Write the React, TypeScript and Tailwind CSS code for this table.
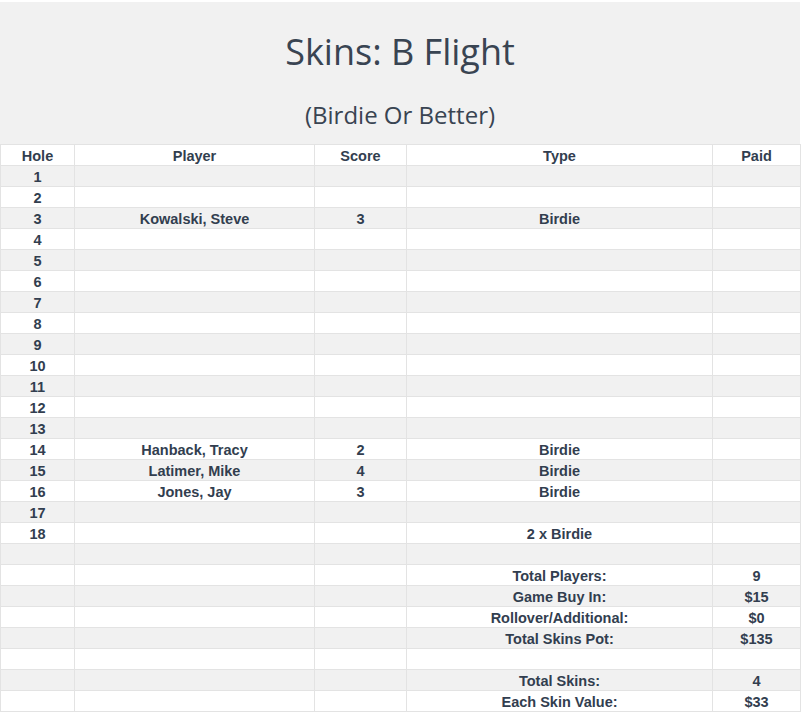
const rows: [string, string, string, string, string][] = [
  ["1", "", "", "", ""],
  ["2", "", "", "", ""],
  ["3", "Kowalski, Steve", "3", "Birdie", ""],
  ["4", "", "", "", ""],
  ["5", "", "", "", ""],
  ["6", "", "", "", ""],
  ["7", "", "", "", ""],
  ["8", "", "", "", ""],
  ["9", "", "", "", ""],
  ["10", "", "", "", ""],
  ["11", "", "", "", ""],
  ["12", "", "", "", ""],
  ["13", "", "", "", ""],
  ["14", "Hanback, Tracy", "2", "Birdie", ""],
  ["15", "Latimer, Mike", "4", "Birdie", ""],
  ["16", "Jones, Jay", "3", "Birdie", ""],
  ["17", "", "", "", ""],
  ["18", "", "", "2 x Birdie", ""],
  ["", "", "", "", ""],
  ["", "", "", "Total Players:", "9"],
  ["", "", "", "Game Buy In:", "$15"],
  ["", "", "", "Rollover/Additional:", "$0"],
  ["", "", "", "Total Skins Pot:", "$135"],
  ["", "", "", "", ""],
  ["", "", "", "Total Skins:", "4"],
  ["", "", "", "Each Skin Value:", "$33"],
];

const cell =
  "h-[21px] border-r border-b border-[#e3e3e3] p-0 pt-[2px] text-center align-middle leading-none";

export default function App() {
  return (
    <div className="min-h-screen bg-white font-['Liberation_Sans',Arial,sans-serif] text-[#323e4f]">
      <div className="w-[800px] pt-[2px]">
        {/* title block */}
        <div className="flex h-[142px] flex-col items-center bg-[#f1f1f1] font-['Open_Sans','Noto_Sans',sans-serif] text-[#394452]">
          <h1 className="mt-[28px] text-[36px] leading-[44px]">Skins: B Flight</h1>
          <p className="mt-[26px] text-[24px] leading-[30px]">(Birdie Or Better)</p>
        </div>

        <table className="w-[800px] table-fixed border-collapse border-l border-[#e3e3e3] text-[14.5px] font-bold">
          <colgroup>
            <col className="w-[74px]" />
            <col className="w-[240px]" />
            <col className="w-[92px]" />
            <col className="w-[306px]" />
            <col className="w-[88px]" />
          </colgroup>
          <thead>
            <tr className="bg-white">
              {["Hole", "Player", "Score", "Type", "Paid"].map((h) => (
                <th key={h} className={cell + " border-t"}>
                  {h}
                </th>
              ))}
            </tr>
          </thead>
          <tbody>
            {rows.map((r, i) => (
              <tr key={i} className={i % 2 === 0 ? "bg-[#f1f1f1]" : "bg-white"}>
                {r.map((v, j) => (
                  <td key={j} className={cell}>
                    {v}
                  </td>
                ))}
              </tr>
            ))}
          </tbody>
        </table>
      </div>
    </div>
  );
}
